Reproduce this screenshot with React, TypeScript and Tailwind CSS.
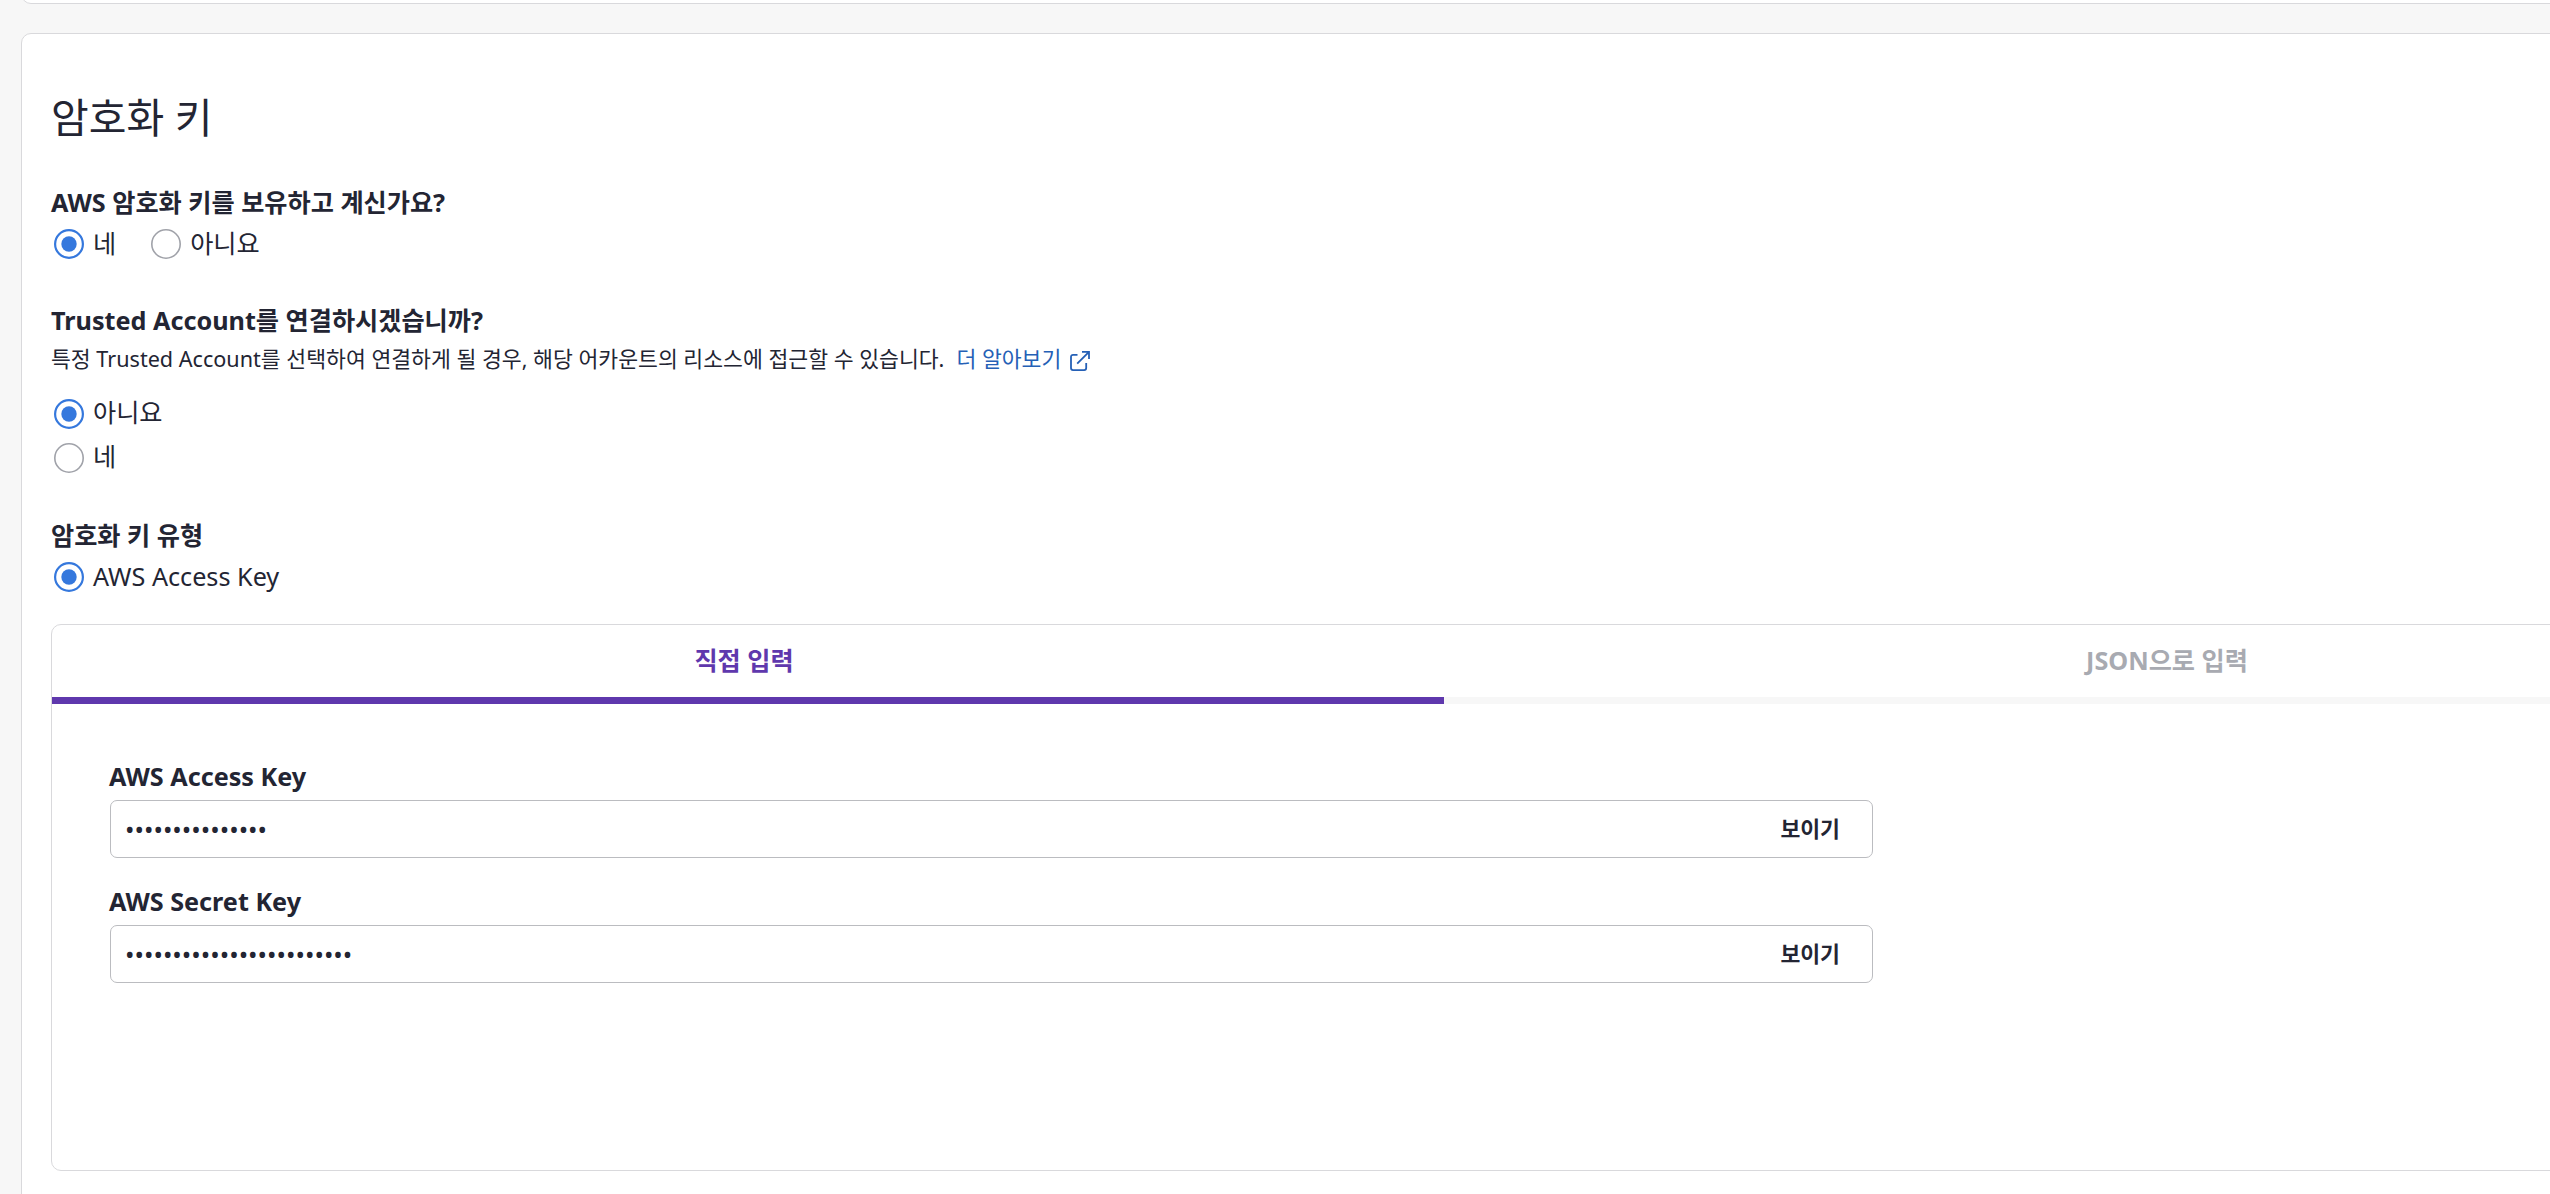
import { useState } from "react";

function Radio({ checked, label, raised }: { checked?: boolean; label: string; raised?: boolean }) {
  return (
    <label className="flex h-[30px] items-start">
      <svg viewBox="0 0 30 30" className="mt-px size-[30px] shrink-0" fill="none">
        {checked ? (
          <>
            <circle cx="15" cy="15" r="13.9" stroke="#3578dd" strokeWidth="2.2" />
            <circle cx="15" cy="15" r="7.7" fill="#3578dd" />
          </>
        ) : (
          <circle cx="15" cy="15" r="14.2" stroke="#a0a2a9" strokeWidth="1.6" />
        )}
      </svg>
      <span className={`${raised ? "-mt-px" : ""} ml-[9px] text-[25.2px] leading-[30px] whitespace-nowrap`}>{label}</span>
    </label>
  );
}

function Heading({ children }: { children: string }) {
  return <h2 className="text-[25.2px] leading-8 font-bold whitespace-nowrap">{children}</h2>;
}

function SecretField({ label, length }: { label: string; length: number }) {
  return (
    <div className="w-[1763px]">
      <div className="-ml-px">
        <Heading>{label}</Heading>
      </div>
      <div className="mt-2 flex h-[58px] items-center justify-between rounded-[7px] border border-[#bbbcc0] pr-[32px] pl-[14px]">
        <span className="text-[25.2px] leading-8">{"•".repeat(length)}</span>
        <button className="mb-px text-[21.6px] leading-8 font-bold">보이기</button>
      </div>
    </div>
  );
}

export default function App() {
  const [tab, setTab] = useState(0);
  const active = "border-[#5f38ad] text-[#5f38ad]";
  const idle = "border-[#f7f7f7] text-[#a8aab1]";

  return (
    <div className="h-[1194px] overflow-hidden bg-[#f7f7f7] pl-[21px] font-['Noto_Sans','Noto_Sans_CJK_KR',sans-serif] text-[#232533]">
      <div className="w-[2820px]">
        <div className="h-1 overflow-hidden">
          <div className="-mt-9 h-10 rounded-b-[10px] border border-[#d9d9dc] bg-white" />
        </div>
        <section className="mt-[29px] h-[1300px] rounded-[10px] border border-[#d9d9dc] bg-white pt-[55px] pl-[29px]">
          <h1 className="text-[41px] leading-[56px]">암호화 키</h1>

          <div className="mt-[41px]">
            <Heading>AWS 암호화 키를 보유하고 계신가요?</Heading>
            <div className="mt-[10px] flex gap-[35px] pl-[3px]">
              <Radio checked label="네" />
              <Radio label="아니요" />
            </div>
          </div>

          <div className="mt-[46px]">
            <Heading>Trusted Account를 연결하시겠습니까?</Heading>
            <div className="mt-[9px] flex h-7 items-start text-[21.6px] leading-7 whitespace-nowrap">
              <p>특정 Trusted Account를 선택하여 연결하게 될 경우, 해당 어카운트의 리소스에 접근할 수 있습니다.</p>
              <a className="ml-3 flex text-[#2560b6]">
                더 알아보기
                <svg viewBox="0 0 22 22" className="mt-[5px] ml-2 size-[22px]" fill="none" stroke="currentColor" strokeWidth="1.8">
                  <path d="M8.5 4.9H4a2 2 0 0 0-2 2v11.2a2 2 0 0 0 2 2h11.2a2 2 0 0 0 2-2v-5" />
                  <path d="M13 1.9h7v7M20 1.9 8.2 13.7" />
                </svg>
              </a>
            </div>
            <div className="mt-[25px] flex flex-col gap-[14px] pl-[3px]">
              <Radio checked raised label="아니요" />
              <Radio raised label="네" />
            </div>
          </div>

          <div className="mt-[47px]">
            <Heading>암호화 키 유형</Heading>
            <div className="mt-[10px] pl-[3px]">
              <Radio checked label="AWS Access Key" />
            </div>
          </div>

          <div className="mt-[33px] h-[547px] w-[2786px] rounded-[10px] border border-[#d9d9dc]">
            <div className="grid grid-cols-2 text-[25.2px] leading-[70px] font-bold">
              <button onClick={() => setTab(0)} className={`h-[79px] border-b-[7px] pr-2 pb-0.5 ${tab === 0 ? active : idle}`}>
                직접 입력
              </button>
              <button onClick={() => setTab(1)} className={`h-[79px] border-b-[7px] pb-0.5 pl-[54px] ${tab === 1 ? active : idle}`}>
                JSON으로 입력
              </button>
            </div>
            <div className="flex flex-col gap-[27px] pt-[56px] pl-[58px]">
              <SecretField label="AWS Access Key" length={15} />
              <SecretField label="AWS Secret Key" length={24} />
            </div>
          </div>
        </section>
      </div>
    </div>
  );
}
